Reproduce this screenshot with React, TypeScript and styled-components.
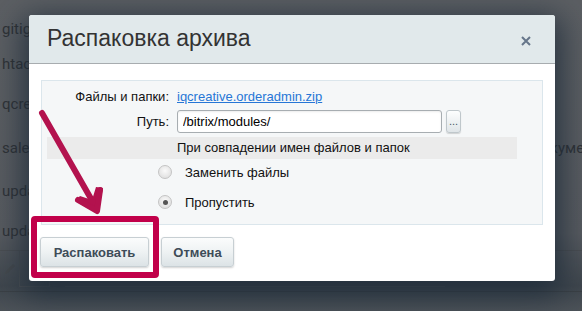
import styled, { createGlobalStyle } from 'styled-components';

const GlobalStyle = createGlobalStyle`
    html, body {
        margin: 0;
        padding: 0;
        background: #5b5e62;
    }
    * { box-sizing: border-box; }
`;

const backRows = [
    { name: 'gitignore', h: 34 },
    { name: 'htaccess', h: 36 },
    { name: 'qcreative.orderadmin.zip', h: 44 },
    { name: 'sale_payment', h: 44, side: 'Документы' },
    { name: 'update_files', h: 41 },
    { name: 'update_files.log', h: 39 },
];

const App = () => {
    return (
        <Page>
            <GlobalStyle />
            <BackList>
                {backRows.map((r) => (
                    <BackRow key={r.name} style={{ height: r.h }}>
                        <BackName>{r.name}</BackName>
                        <BackSide>{r.side}</BackSide>
                    </BackRow>
                ))}
                <BackToolbar>
                    <ToolCell>
                        <svg width="14" height="14" viewBox="0 0 14 14">
                            <path d="M2 12 L3 9 L10 2 L12 4 L5 11 Z" fill="#45494d" />
                        </svg>
                    </ToolCell>
                    <ToolCell />
                    <ToolWide />
                </BackToolbar>
                <BackFooter />
            </BackList>

            <Dialog>
                <Header>
                    <Title>Распаковка архива</Title>
                    <Close>
                        <svg width="10" height="10" viewBox="0 0 10 10">
                            <path d="M1 1 L9 9 M9 1 L1 9" stroke="#66768a" strokeWidth="2" />
                        </svg>
                    </Close>
                </Header>
                <Body>
                    <Panel>
                        <FormGrid>
                            <Label>Файлы и папки:</Label>
                            <Link href="#">iqcreative.orderadmin.zip</Link>
                            <Label>Путь:</Label>
                            <PathRow>
                                <PathInput defaultValue="/bitrix/modules/" />
                                <DotsButton>...</DotsButton>
                            </PathRow>
                        </FormGrid>
                        <Band>При совпадении имен файлов и папок</Band>
                        <RadioRow>
                            <Radio />
                            <RadioText>Заменить файлы</RadioText>
                        </RadioRow>
                        <RadioRow>
                            <Radio $checked />
                            <RadioText>Пропустить</RadioText>
                        </RadioRow>
                    </Panel>
                    <Footer>
                        <Button $width={109}>Распаковать</Button>
                        <Button $width={73}>Отмена</Button>
                    </Footer>
                </Body>
            </Dialog>

            <Highlight />
            <ArrowLayer width="582" height="311" viewBox="0 0 582 311">
                <line x1="42" y1="113" x2="94" y2="204" stroke="#b3124e" strokeWidth="6" strokeLinecap="round" />
                <polygon points="98,214 75,201 80,196 92,200 96,187 103,188" fill="#b3124e" />
                <polyline points="78,200 97,211 100,190" fill="none" stroke="#b3124e" strokeWidth="6" strokeLinejoin="round" strokeLinecap="round" />
            </ArrowLayer>
        </Page>
    );
};

export default App;

const Page = styled.div`
    position: relative;
    width: 582px;
    height: 311px;
    overflow: hidden;
    background: linear-gradient(180deg, #5c5f63 0%, #575a5f 75%, #3f464d 92%, #4d5359 100%);
    font-family: 'Liberation Sans', Arial, sans-serif;
`;

const BackList = styled.div`
    display: flex;
    flex-direction: column;
    padding-top: 12px;
`;

const BackRow = styled.div`
    display: grid;
    grid-template-columns: 528px 1fr;
    align-items: center;
    padding-left: 2px;
    font-family: Roboto, 'Liberation Sans', sans-serif;
    font-size: 15px;
    color: #2f3236;
    white-space: nowrap;
`;

const BackName = styled.span`
    overflow: hidden;
`;

const BackSide = styled.span`
    overflow: hidden;
`;

const BackToolbar = styled.div`
    display: flex;
    height: 42px;
    border-top: 1px solid #4a4d51;
    border-bottom: 1px solid #3b4045;
    padding-bottom: 4px;
`;

const ToolCell = styled.div`
    width: 20px;
    display: flex;
    align-items: center;
    justify-content: center;
    border-right: 1px solid #4a4e52;
    &:nth-child(2) { width: 30px; border-bottom: 1px solid #4a4e52; }
`;

const ToolWide = styled.div`
    width: 380px;
    margin-left: 15px;
    border-bottom: 1px solid #4a4e52;
`;

const BackFooter = styled.div`
    flex: 1;
`;

const Dialog = styled.div`
    position: absolute;
    left: 29px;
    top: 15px;
    width: 526px;
    height: 266px;
    background: #fff;
    border-radius: 3px;
    box-shadow: 0 8px 30px 6px rgba(25, 40, 55, 0.8);
    overflow: hidden;
`;

const Header = styled.div`
    height: 49px;
    display: flex;
    align-items: center;
    justify-content: space-between;
    padding: 0 24px 0 18px;
    background: #e1e9eb;
    border-bottom: 1px solid #a7acaf;
`;

const Title = styled.div`
    font-size: 23px;
    color: #333;
    padding-bottom: 2px;
`;

const Close = styled.div`
    display: flex;
    padding-top: 4px;
`;

const Body = styled.div`
    padding: 16px 12px 0 12px;
`;

const Panel = styled.div`
    height: 145px;
    background: #f5f7f8;
    border: 1px solid #dbe6ec;
    padding: 5px 0 0 0;
`;

const FormGrid = styled.div`
    display: grid;
    grid-template-columns: 127px 1fr;
    column-gap: 8px;
    row-gap: 2px;
    align-items: center;
    font-size: 13px;
`;

const Label = styled.div`
    text-align: right;
    color: #111;
    line-height: 22px;
`;

const Link = styled.a`
    color: #2676d6;
    text-decoration: underline;
    line-height: 22px;
`;

const PathRow = styled.div`
    display: flex;
    gap: 4px;
    align-items: center;
`;

const PathInput = styled.input`
    width: 265px;
    height: 23px;
    border: 1px solid #a7adb1;
    border-radius: 3px;
    padding: 0 5px;
    font-family: 'Liberation Sans', Arial, sans-serif;
    font-size: 13px;
    color: #000;
    background: #fff;
    box-shadow: inset 0 1px 2px rgba(0, 0, 0, 0.08);
    outline: none;
`;

const DotsButton = styled.div`
    width: 15px;
    height: 23px;
    border: 1px solid #bfc7cb;
    border-radius: 3px;
    background: linear-gradient(180deg, #fdfefe, #dfe5e8);
    font-size: 11px;
    color: #4a5a66;
    display: flex;
    align-items: flex-end;
    justify-content: center;
    padding-bottom: 5px;
    box-shadow: 0 1px 1px rgba(0, 0, 0, 0.15);
`;

const Band = styled.div`
    margin: 4px 0 0 5px;
    width: 470px;
    height: 22px;
    background: #ebebeb;
    padding-left: 130px;
    font-size: 13px;
    line-height: 22px;
    color: #111;
`;

const RadioRow = styled.div`
    display: flex;
    align-items: center;
    height: 30px;
    padding: 0 0 4px 116px;
    gap: 13px;
`;

const Radio = styled.span<{ $checked?: boolean }>`
    width: 14px;
    height: 14px;
    border-radius: 50%;
    border: 1px solid #c4c4c4;
    background: radial-gradient(circle at 50% 40%, #fafafa, #d9d9d9);
    display: flex;
    align-items: center;
    justify-content: center;
    &::after {
        content: '';
        display: ${(p) => (p.$checked ? 'block' : 'none')};
        width: 5px;
        height: 5px;
        border-radius: 50%;
        background: #555;
    }
`;

const RadioText = styled.span`
    font-size: 13px;
    color: #111;
`;

const Footer = styled.div`
    display: flex;
    gap: 12px;
    padding: 12px 0 0 0;
    margin-left: -1px;
`;

const Button = styled.div<{ $width: number }>`
    width: ${(p) => p.$width}px;
    height: 30px;
    border: 1px solid #c7cfd3;
    border-radius: 3px;
    background: linear-gradient(180deg, #fbfcfc 0%, #eef2f3 50%, #dce3e6 100%);
    box-shadow: 0 1px 2px rgba(0, 0, 0, 0.18);
    display: flex;
    align-items: center;
    justify-content: center;
    font-size: 13px;
    font-weight: bold;
    color: #3e4c58;
`;

const Highlight = styled.div`
    position: absolute;
    left: 31px;
    top: 216px;
    width: 128px;
    height: 62px;
    border: 6px solid #c1004a;
    border-radius: 4px;
    pointer-events: none;
`;

const ArrowLayer = styled.svg`
    position: absolute;
    left: 0;
    top: 0;
    pointer-events: none;
`;
